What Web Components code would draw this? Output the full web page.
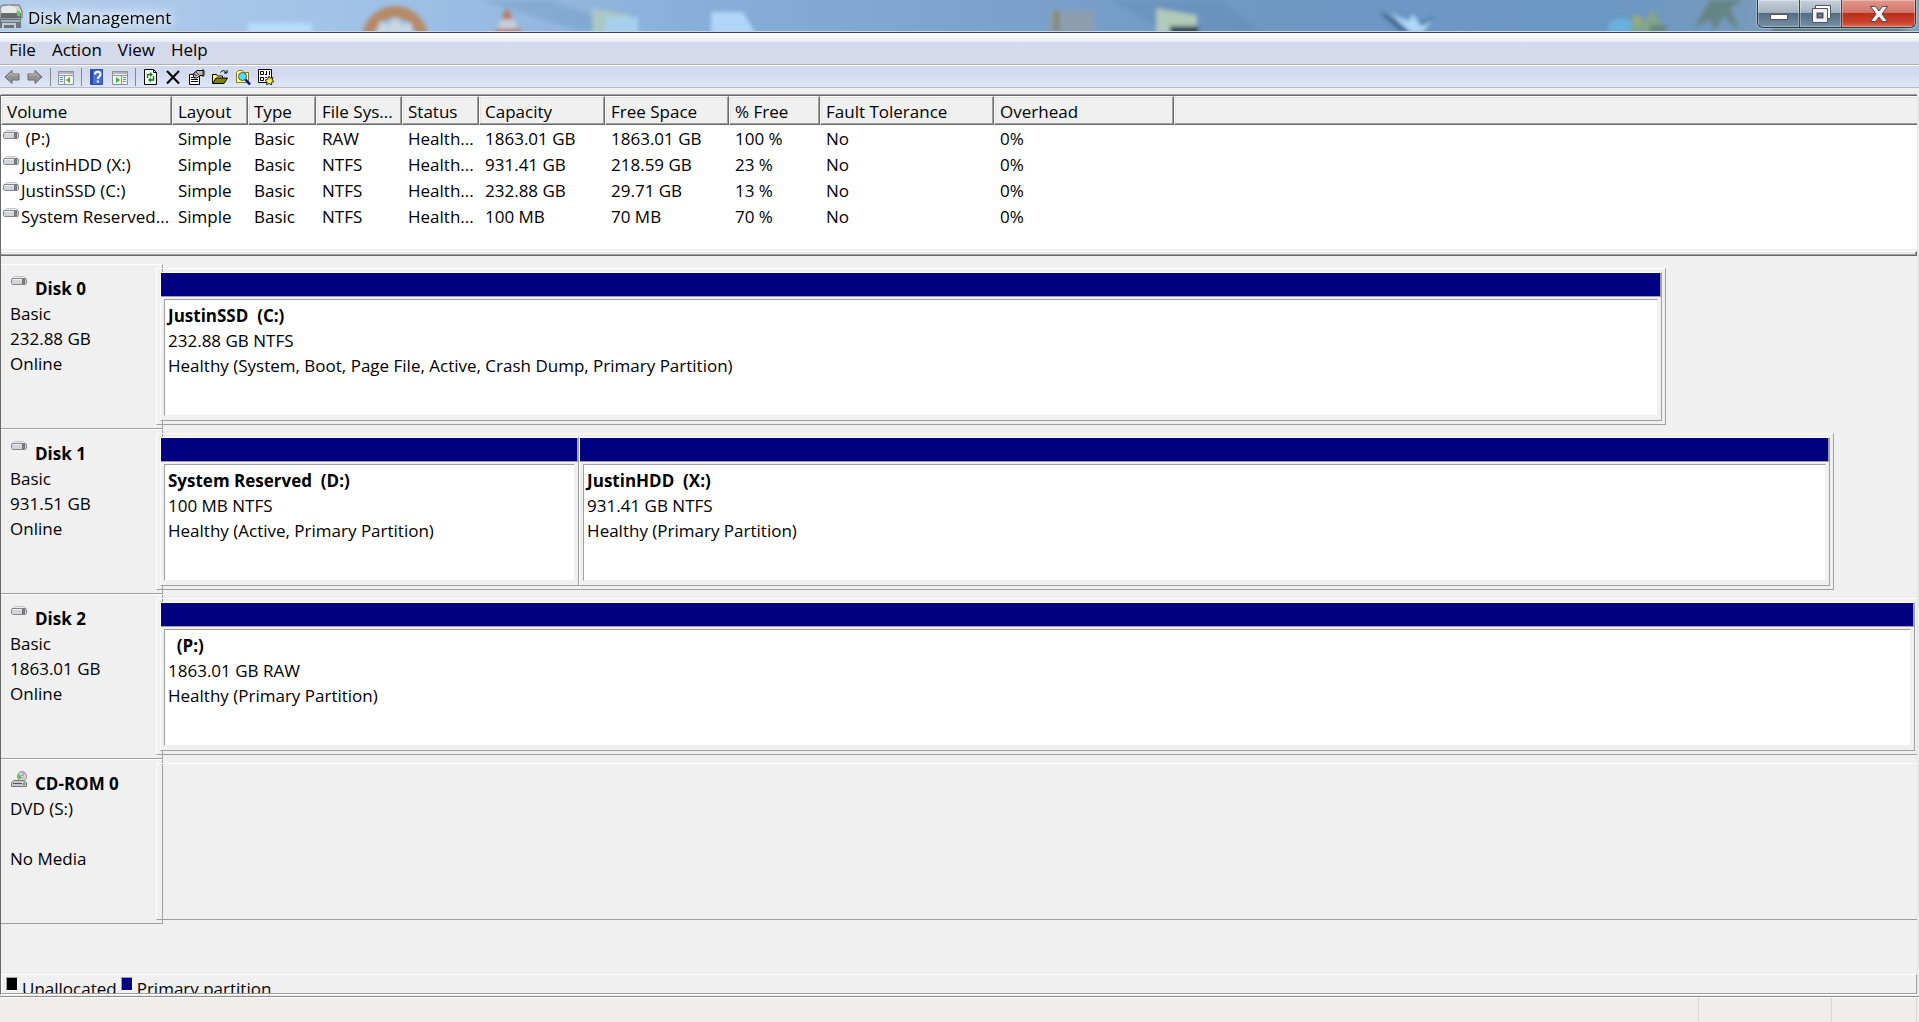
<!DOCTYPE html>
<html lang="en">
<head>
<meta charset="utf-8">
<title>Disk Management</title>
<style>
    html, body {
        margin: 0;
        height: 100%;
    }

    body {
        font-family: "Open Sans", "Noto Sans", sans-serif;
        font-size: 17px;
        line-height: 25px;
        color: #000;
        background: #f0f0f0;
        overflow: hidden;
        --face: #f0f0f0;
        --shadow: #a0a0a0;
        --dark: #696969;
        --light: #e3e3e3;
        --navy: #000080;
    }
</style>
</head>
<body>
<disk-management></disk-management>

<script>
// Small helper: every element is an open shadow root with its own markup
class BaseElement extends HTMLElement {
    constructor() {
        super();
        this.attachShadow({ mode: "open" });
    }

    connectedCallback() {
        this.shadowRoot.innerHTML = this.render();
    }
}

const ICONS = {
    back: `<path d="M1 8 8 1.500V5h7v6H8v3.500z" fill="#929292" stroke="#6a6a6a"/><path d="M3 8l4-4v2h7" fill="none" stroke="#bdbdbd"/>`,
    forward: `<path d="M15 8 8 1.500V5H1v6h7v3.500z" fill="#929292" stroke="#6a6a6a"/><path d="M2 6h6V4l4 4" fill="none" stroke="#bdbdbd"/>`,
    tree: `<path d="M.5 2.500h15v13H.5z" fill="#f4f4f4" stroke="#8e9296"/><path d="M1 3h14v2H1z" fill="#b4bac2"/><path d="M11 4h1M13 4h1M0 6.500h16M6.500 7v9" stroke="#8e9296"/><path d="M2 8.500h3M2 10.500h3M2 12.500h3" stroke="#5a8ccc"/><path d="M12 8v6l-4-3z" fill="#3cb820"/>`,
    help: `<path d="M1.500.5h12v15h-12z" fill="#4a70d4" stroke="#2c4cae"/><path d="M2 1h2v14H2z" fill="#2a4aa8"/><path d="M6 5.500C6 2 11.500 2 11.500 5.200 11.500 7.500 8.800 7.500 8.800 10M8.800 11.500v2" fill="none" stroke="#fff" stroke-width="2"/>`,
    pane: `<path d="M.5 2.500h15v13H.5z" fill="#f4f4f4" stroke="#8e9296"/><path d="M1 3h14v2H1z" fill="#b4bac2"/><path d="M11 4h1M13 4h1M0 6.500h16M9.500 7v9" stroke="#8e9296"/><path d="M11 8.500h3M11 10.500h3M11 12.500h3" stroke="#5a8ccc"/><path d="M4 8v6l4-3z" fill="#3cb820"/>`,
    refresh: `<path d="M1.500.5h9l3 3v12h-12z" fill="#fff" stroke="#000"/><path d="M10.500.5v3h3" fill="none" stroke="#000"/><path d="M4.500 9V5.500h3M10.500 7v4h-3" fill="none" stroke="#088018" stroke-width="1.500"/><path d="M7 3v5l3-2.500zM8 8.500v5L5 11z" fill="#088018"/>`,
    remove: `<path d="M1 2l12 12.500M13 2 1 14.500" stroke="#000" stroke-width="2"/>`,
    props: `<path d="M.5 5.500h10v10H.5z" fill="#fff" stroke="#000"/><path d="M2 8.500h7M2 10.500h7M2 12.500h7" stroke="#000"/><path d="M4 5l4-3.500h7v5h-4L8 9H5z" fill="#b8b8b8" stroke="#000"/><path d="M5 5l3 2M7 3l3 3M14 0v8" stroke="#333"/>`,
    open: `<path d="M.5 14V5.500h4l1 1.500h5v2" fill="#ffff66" stroke="#000"/><path d="M.5 14.500 4 9h11.500L12 14.500z" fill="#808000" stroke="#000"/><path d="M8.500 3.500C10 1 13 1 14 4M12 4h3V1" fill="none" stroke="#000"/>`,
    search: `<path d="M1.500 13.500V3.500l2-2h4l1 2h5v10z" fill="#ffff80" stroke="#807830"/><circle cx="7.500" cy="7.500" r="4" fill="#50e0e8" stroke="#555"/><path d="M10.500 10.500 15 15.500" stroke="#0010a0" stroke-width="2.500"/>`,
    settings: `<path d="M.5.500h13v13H.5z" fill="#fff" stroke="#000"/><path d="M2.500 2.500h3v3h-3zM2.500 8.500h3v3h-3z" fill="#fff" stroke="#000"/><path d="M7 5.500h2M8.500 2v3M11.500 2v4M7 8.500h2M7 11.500h2" stroke="#000"/><path d="M11 7l1.200 2.200 2.800-.7-.8 2.500 1.800 1.500-2.300.8-.2 2.700-2.200-1.500-2.600 1.200.2-2.700-1.900-1.800 2.500-.9z" fill="#f4e430" stroke="#000" stroke-width=".8"/><circle cx="11" cy="12" r="1" fill="#fff"/>`
};

class TitleBar extends BaseElement {
    render() {
        return `
            <style>
                :host {
                    display: flex;
                    flex: none;
                    position: relative;
                    height: 31px;
                    overflow: hidden;
                    background: linear-gradient(90deg, #b4cdea 0, #9dbfe6 22%, #86acd8 38%, #7ba2cd 52%, #6e97c4 66%, #6b97c4 84%, #7d9cb8 94%, #85a3b8 100%);
                    border-bottom: 1px solid #c6d8e8;
                    box-shadow: 0 1px #34465c;
                }
                .desktop {
                    position: absolute;
                    inset: 0;
                    height: 31px;
                }
                .caption {
                    position: relative;
                    display: flex;
                    flex: 1;
                    align-items: center;
                    gap: 5px;
                }
                h1 {
                    margin: 0;
                    padding-top: 4px;
                    font-size: 17px;
                    font-weight: 400;
                    text-shadow: 0 0 10px #fff, 0 0 14px #fff, 0 0 18px #fff;
                }
                .icon { padding-top: 3px; }
                .buttons {
                    position: relative;
                    display: flex;
                    height: 27px;
                    margin-right: 3px;
                    border: 1px solid #26384c;
                    border-top: 0;
                    border-radius: 0 0 6px 6px;
                    box-shadow: 0 0 0 1px #c3d0dc99;
                    overflow: hidden;
                }
                button {
                    width: 42px;
                    padding: 0;
                    border: 0;
                    border-right: 1px solid #34465c;
                    box-shadow: inset 0 0 0 1px #ffffff55;
                    background: linear-gradient(#c8d0da, #a6b2c0 46%, #556c84 50%, #7890a4);
                }
                .close {
                    width: 73px;
                    border-right: 0;
                    background: linear-gradient(#e0968a, #d4756a 46%, #b8301c 50%, #c8402c 80%, #d86a50);
                }
                button svg { display: block; margin: auto; }
            </style>
            <svg class="desktop" width="1919" height="31" aria-hidden="true">
                <defs><filter id="soft" x="-20%" y="-20%" width="140%" height="140%"><feGaussianBlur stdDeviation="2"/></filter></defs>
                <path d="M480 0h70l90 31h-60zM1110 0h110l40 31h-95z" fill="#50789f" opacity=".2" filter="url(#soft)"/>
                <g filter="url(#soft)">
                    <path d="M248 23h64v12h-64z" fill="#b8dcfc"/>
                    <path d="M40 27h36v8H40z" fill="#b5c9a2"/>
                    <circle cx="395" cy="39" r="27" fill="none" stroke="#b58a68" stroke-width="12"/>
                    <path d="M376 35l4-14 8 5 7-9 7 9 9-4 2 13z" fill="#c9d7e4"/>
                    <path d="M507 8l6 11h-12z" fill="#bd7556"/><path d="M500 20h15l4 15h-23z" fill="#c9cfd8"/><path d="M496 29h24v6h-24z" fill="#b56e50"/>
                    <path d="M592 8l38 7v20h-38z" fill="#aac8c8"/><path d="M606 17h32v18h-32z" fill="#a7d0ee"/>
                    <path d="M711 12h32l13 22h-45z" fill="#b2d6fa"/>
                    <path d="M1048 10h46v25h-46z" fill="#8c9eae"/><path d="M1054 11h5v22h-5z" fill="#83886f"/>
                    <path d="M1156 8l41 7v20h-41z" fill="#b0cabb"/><path d="M1170 26h28v9h-28z" fill="#33464f"/>
                    <path d="M1379 12l28 24h15l11-19-13 6-8-9-6 8z" fill="#355f8b"/><path d="M1389 13l22 20h12l9-13-11 6-8-12-5 7z" fill="#b0d8fa"/>
                    <path d="M1608 24q15-12 25 0v9h-25z" fill="#69b0de"/><path d="M1630 33l5-18 8 8 10-14 14 24z" fill="#82a48b"/><circle cx="1637" cy="20" r="5" fill="#9bab76"/>
                    <path d="M1650 25h16v8h-16zM1694 28l16-28h34l-14 8 10 25-16-17-10 15-4-12z" fill="#607c74" opacity=".75"/>
                    <path d="M1770 22l26-18 36 24 30-12 50 15h-140z" fill="#53706b"/>
                </g>
            </svg>
            <div class="caption">
                <svg class="icon" width="23" height="26" viewBox="0 0 23 26" aria-hidden="true">
                    <path d="M0 3 3 1h16l3 6v7H0z" fill="#d2d3d4" stroke="#666"/>
                    <path d="M1 9h20v5H1z" fill="#68696d"/><path d="M2 4q7-5 14 0v5H2z" fill="#e9e9e7"/>
                    <path d="M17 7h3v5h-3z" fill="#42de38"/>
                    <path d="M0 15h21v9H0z" fill="#6a747f"/><path d="M1 16h19v2H1z" fill="#a5b0ba"/>
                    <path d="M3 19v5M15 19v5M3 20h12" stroke="#c2cad0" stroke-width="2"/>
                </svg>
                <h1>Disk Management</h1>
            </div>
            <div class="buttons">
                <button aria-label="Minimize"><svg width="18" height="18"><path d="M.5 9.500h17v5H.5z" fill="#fff" stroke="#4b5468"/></svg></button>
                <button aria-label="Restore"><svg width="20" height="20"><path d="M4.500 1.500h15v13h-15z" fill="#fff" stroke="#4b5468"/><path d="M1.500 4.500h15v14h-15z" fill="#f2f2f2" stroke="#4b5468"/><path d="M6.500 9.500h5v4h-5z" fill="#8090a4" stroke="#4b5468" stroke-width="2"/></svg></button>
                <button class="close" aria-label="Close"><svg width="20" height="18"><path d="M1.500 1.500h5L10 6l3.500-4.500h5L13 9l5.500 7.500h-5L10 12l-3.500 4.500h-5L7 9z" fill="#f4f4f4" stroke="#5a4450"/></svg></button>
            </div>`;
    }
}

class MenuBar extends BaseElement {
    render() {
        return `
            <style>
                :host {
                    display: block;
                    margin-top: 1px;
                    height: 31px;
                    background: linear-gradient(#fff, #e6ecf6 9px, #d4daec 9px);
                    border-bottom: 1px solid #b0b0b4;
                }
                nav { display: flex; padding: 4px 1px; }
                button {
                    padding: 0 8px;
                    border: 0;
                    background: none;
                    font: inherit;
                    color: inherit;
                }
            </style>
            <nav>
                <button>File</button><button>Action</button><button>View</button><button>Help</button>
            </nav>`;
    }
}

class ToolBar extends BaseElement {
    render() {
        const groups = [
            [["back", "Back"], ["forward", "Forward"]],
            [["tree", "Show/Hide Console Tree"]],
            [["help", "Help"], ["pane", "Show/Hide Action Pane"]],
            [["refresh", "Refresh"], ["remove", "Delete"], ["props", "Properties"], ["open", "Open"], ["search", "Explore"], ["settings", "Settings"]]
        ];
        const button = ([icon, label]) =>
            `<button aria-label="${label}"><svg width="16" height="16" viewBox="0 0 16 16">${ICONS[icon]}</svg></button>`;

        return `
            <style>
                :host {
                    display: flex;
                    align-items: center;
                    height: 21px;
                    padding-left: 1px;
                    background: linear-gradient(#d2daea, #d4daee 40%, #e0e7f5);
                    border-top: 1px solid #fff;
                    border-bottom: 1px solid #b2bace;
                }
                button {
                    width: 23px;
                    height: 20px;
                    padding: 0 4px 0 3px;
                    border: 0;
                    background: none;
                }
                svg { display: block; }
                i {
                    width: 1px;
                    height: 18px;
                    margin: 0 4px 0 3px;
                    background: #85888f;
                }
            </style>
            ${groups.map((g) => g.map(button).join("")).join("<i></i>")}`;
    }
}

class DiskIcon extends BaseElement {
    render() {
        const cd = this.getAttribute("kind") === "cd";
        return `
            <style>
                :host { display: inline-block; width: 16px; }
                svg { display: block; }
            </style>
            ${cd ? `
            <svg width="16" height="17" viewBox="0 0 16 17" aria-hidden="true">
                <ellipse cx="11" cy="5.500" rx="4.500" ry="5" fill="#d6d2dc" stroke="#909098"/>
                <path d="M7 3l3 2v3L7 7z" fill="#58c058"/><path d="M11 1l3 1-2 3z" fill="#c88cc0"/><circle cx="11" cy="5.500" r="1.200" fill="#fff" stroke="#999"/>
                <path d="M.5 11.500 3 9.500h10l2.500 2v4H.5z" fill="#c8c8cc" stroke="#77777c"/>
                <path d="M2 12.500h9" stroke="#555"/><path d="M12 12h2v2h-2z" fill="#30b030"/>
            </svg>` : `
            <svg width="16" height="9" viewBox="0 0 16 9" aria-hidden="true">
                <path d="M1 3 3.500.5h9L15 3z" fill="#ececec" stroke="#c4c4c8"/>
                <path d="M.5 3.500Q.5 2.500 2 2.500h12q1.500 0 1.500 1V7.500l-1 1h-13l-1-1z" fill="#d3d3dc" stroke="#85858b"/>
                <path d="M2 3.500h9" stroke="#f0f0f4"/>
                <path d="M11 3h3v5h-3z" fill="#707076"/><path d="M12 4h1v3h-1z" fill="#39c328"/>
            </svg>`}`;
    }
}

class VolumeList extends BaseElement {
    render() {
        const columns = [
            ["Volume", 171], ["Layout", 76], ["Type", 68], ["File Sys...", 86], ["Status", 77], ["Capacity", 126],
            ["Free Space", 124], ["% Free", 91], ["Fault Tolerance", 174], ["Overhead", 180]
        ];
        const rows = [
            ["&nbsp;(P:)", "Simple", "Basic", "RAW", "Health...", "1863.01 GB", "1863.01 GB", "100 %", "No", "0%"],
            ["JustinHDD (X:)", "Simple", "Basic", "NTFS", "Health...", "931.41 GB", "218.59 GB", "23 %", "No", "0%"],
            ["JustinSSD (C:)", "Simple", "Basic", "NTFS", "Health...", "232.88 GB", "29.71 GB", "13 %", "No", "0%"],
            ["System Reserved...", "Simple", "Basic", "NTFS", "Health...", "100 MB", "70 MB", "70 %", "No", "0%"]
        ];

        return `
            <style>
                :host {
                    display: block;
                    height: 153px;
                    background: #fff;
                    border-top: 1px solid var(--dark);
                    box-shadow: 0 -1px var(--shadow);
                }
                table {
                    width: 100%;
                    table-layout: fixed;
                    border-collapse: separate;
                    border-spacing: 0;
                }
                th, td {
                    box-sizing: border-box;
                    padding: 2px 0 0 6px;
                    text-align: left;
                    font-weight: 400;
                    line-height: 24px;
                    white-space: nowrap;
                }
                th {
                    height: 29px;
                    padding-left: 5px;
                    background: var(--face);
                    border: 1px solid #fff;
                    border-right-color: var(--dark);
                    border-bottom-color: var(--dark);
                    box-shadow: inset -1px -1px var(--shadow), inset 1px 1px var(--light);
                }
                .rest { border-right: 0; box-shadow: inset 0 -1px var(--shadow), inset 1px 1px var(--light); }
                td:first-child { padding-left: 2px; }
                .name { display: flex; gap: 2px; }
                disk-icon { padding-top: 3px; }
            </style>
            <table>
                <colgroup>${columns.map((c) => `<col style="width:${c[1]}px">`).join("")}<col></colgroup>
                <thead>
                    <tr>${columns.map((c) => `<th>${c[0]}</th>`).join("")}<th class="rest"></th></tr>
                </thead>
                <tbody>
                    ${rows.map((r) => `
                    <tr>
                        <td><div class="name"><disk-icon></disk-icon><span>${r[0]}</span></div></td>
                        ${r.slice(1).map((v) => `<td>${v}</td>`).join("")}<td></td>
                    </tr>`).join("")}
                </tbody>
            </table>`;
    }
}

// Bar between the list and the graphical view
class PaneSplitter extends BaseElement {
    render() {
        return `
            <style>
                :host {
                    display: block;
                    height: 3px;
                    margin-top: 2px;
                    border-top: 1px solid #fff;
                    border-bottom: 1px solid var(--dark);
                    border-right: 1px solid var(--dark);
                    box-shadow: inset -1px -1px var(--shadow), inset 1px 1px var(--light);
                    background: var(--face);
                }
            </style>`;
    }
}

// share = width of the volume strip, rest = empty space on its right
class DiskRow extends BaseElement {
    render() {
        const share = this.getAttribute("share");
        const rest = this.getAttribute("rest") || 0;
        const kind = this.getAttribute("kind") || "disk";
        return `
            <style>
                :host { display: flex; height: 165px; }
                .label {
                    box-sizing: border-box;
                    flex: none;
                    width: 162px;
                    padding: 11px 0 0 9px;
                    border: 1px solid var(--shadow);
                    border-top-color: #fff;
                    border-left: 0;
                }
                .head { display: flex; gap: 8px; padding-left: 1px; }
                h2 {
                    margin: 0;
                    font-size: 17px;
                    font-weight: 700;
                }
                .area {
                    display: flex;
                    flex: 1;
                    margin: 4px 0 4px -7px;
                    min-width: 0;
                }
                .strip {
                    box-sizing: border-box;
                    display: flex;
                    flex: ${share} 1 0;
                    min-width: 0;
                    padding: 3px;
                    border: 1px solid var(--shadow);
                    border-top-color: #fff;
                    border-left-color: #fff;
                }
                :host([open-end]) .strip { border-right: 0; padding-right: 2px; }
                .rest { flex: ${rest} 1 0; }
            </style>
            <div class="label">
                <div class="head"><disk-icon kind="${kind}"></disk-icon><h2>${this.getAttribute("name")}</h2></div>
                <slot name="info"></slot>
            </div>
            <div class="area">
                <div class="strip"><slot></slot></div>
                <div class="rest"></div>
            </div>`;
    }
}

class VolumeBox extends BaseElement {
    render() {
        const share = this.getAttribute("share") || 1;
        return `
            <style>
                :host {
                    box-sizing: border-box;
                    display: flex;
                    flex-direction: column;
                    flex: ${share} 1 0;
                    min-width: 0;
                    background: var(--face);
                    border: 1px solid var(--shadow);
                    border-top-color: #fff;
                    border-left-color: #fff;
                }
                .bar {
                    height: 23px;
                    background: var(--navy);
                    border-right: 1px solid var(--shadow);
                    border-bottom: 1px solid var(--shadow);
                }
                .body {
                    flex: 1;
                    margin: 2px 3px 4px;
                    padding: 3px;
                    background: #fff;
                    border: 1px solid var(--face);
                    border-top-color: var(--shadow);
                    border-left-color: var(--shadow);
                    white-space: nowrap;
                    overflow: hidden;
                }
                strong { display: block; font-weight: 700; white-space: pre; }
            </style>
            <div class="bar"></div>
            <div class="body">
                <strong>${this.getAttribute("name")}</strong>
                <slot></slot>
            </div>`;
    }
}

class DiskLegend extends BaseElement {
    render() {
        return `
            <style>
                :host {
                    box-sizing: border-box;
                    display: flex;
                    height: 20px;
                    padding: 2px 0 0 4px;
                    border: 1px solid var(--shadow);
                    border-top-color: #fff;
                    border-left-color: #fff;
                    overflow: hidden;
                }
                span { display: flex; gap: 4px; margin-right: 4px; line-height: 24px; }
                i {
                    box-sizing: border-box;
                    width: 12px;
                    height: 14px;
                    border: 1px solid #fff;
                    border-top-color: var(--shadow);
                    border-left-color: var(--shadow);
                    background: #000;
                }
                .primary i { background: var(--navy); }
            </style>
            <span><i></i>Unallocated</span>
            <span class="primary"><i></i>Primary partition</span>`;
    }
}

class StatusBar extends BaseElement {
    render() {
        return `
            <style>
                :host {
                    box-sizing: border-box;
                    display: flex;
                    height: 26px;
                    padding-right: 2px;
                    background: #f1edec;
                    border-top: 1px solid #8c8c8c;
                    box-shadow: inset 0 1px #fff;
                }
                div { border-right: 1px solid #d7d5d6; margin-top: 1px; }
                .text { flex: 1; }
                .a { width: 132px; }
                .b { width: 84px; }
            </style>
            <div class="text"></div><div class="a"></div><div class="b"></div>`;
    }
}

class DiskManagement extends BaseElement {
    render() {
        return `
            <style>
                :host {
                    display: flex;
                    flex-direction: column;
                    height: 100vh;
                }
                .content {
                    display: flex;
                    flex-direction: column;
                    flex: 1;
                    min-height: 0;
                    margin: 7px 1px 0 0;
                    border-left: 1px solid var(--dark);
                    border-right: 1px solid var(--light);
                    border-bottom: 1px solid #fff;
                }
                .disks {
                    flex: 1;
                    min-height: 0;
                    padding-top: 8px;
                    overflow: hidden;
                }
                p { margin: 0; min-height: 25px; }
                status-bar { margin-top: 1px; }
            </style>
            <title-bar></title-bar>
            <menu-bar></menu-bar>
            <tool-bar></tool-bar>
            <div class="content">
                <volume-list></volume-list>
                <pane-splitter></pane-splitter>
                <div class="disks">
                    <disk-row name="Disk 0" share="1509" rest="252">
                        <div slot="info"><p>Basic</p><p>232.88 GB</p><p>Online</p></div>
                        <volume-box name="JustinSSD  (C:)"><p>232.88 GB NTFS</p><p>Healthy (System, Boot, Page File, Active, Crash Dump, Primary Partition)</p></volume-box>
                    </disk-row>
                    <disk-row name="Disk 1" share="1678" rest="83">
                        <div slot="info"><p>Basic</p><p>931.51 GB</p><p>Online</p></div>
                        <volume-box name="System Reserved  (D:)" share="418"><p>100 MB NTFS</p><p>Healthy (Active, Primary Partition)</p></volume-box>
                        <volume-box name="JustinHDD  (X:)" share="1252"><p>931.41 GB NTFS</p><p>Healthy (Primary Partition)</p></volume-box>
                    </disk-row>
                    <disk-row name="Disk 2" share="1" open-end>
                        <div slot="info"><p>Basic</p><p>1863.01 GB</p><p>Online</p></div>
                        <volume-box name="  (P:)"><p>1863.01 GB RAW</p><p>Healthy (Primary Partition)</p></volume-box>
                    </disk-row>
                    <disk-row name="CD-ROM 0" kind="cd" share="1" open-end>
                        <div slot="info"><p>DVD (S:)</p><p></p><p>No Media</p></div>
                    </disk-row>
                </div>
                <disk-legend></disk-legend>
            </div>
            <status-bar></status-bar>`;
    }
}

customElements.define("title-bar", TitleBar);
customElements.define("menu-bar", MenuBar);
customElements.define("tool-bar", ToolBar);
customElements.define("disk-icon", DiskIcon);
customElements.define("volume-list", VolumeList);
customElements.define("pane-splitter", PaneSplitter);
customElements.define("disk-row", DiskRow);
customElements.define("volume-box", VolumeBox);
customElements.define("disk-legend", DiskLegend);
customElements.define("status-bar", StatusBar);
customElements.define("disk-management", DiskManagement);
</script>
</body>
</html>
